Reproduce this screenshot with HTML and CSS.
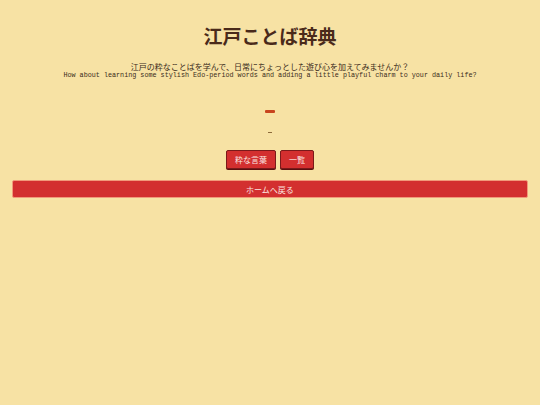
FILE: index.html
```html
<!DOCTYPE html>
<html lang="ja">
<head>
<meta charset="utf-8">
<link rel="stylesheet" href="styles.css">
</head>
<body>
<main class="page">
  <h1 class="title">江戸ことば辞典</h1>
  <div class="intro">
    <p class="intro-ja">江戸の粋なことばを学んで、日常にちょっとした遊び心を加えてみませんか？</p>
    <p class="intro-en">How about learning some stylish Edo-period words and adding a little playful charm to your daily life?</p>
  </div>
  <div class="word">
    <div class="word-mark"></div>
    <div class="word-sub"></div>
  </div>
  <nav class="actions">
    <button class="btn">粋な言葉</button>
    <button class="btn">一覧</button>
  </nav>
  <button class="btn-wide">ホームへ戻る</button>
</main>
</body>
</html>
```
FILE: styles.css
```css
html, body {
  margin: 0;
  padding: 0;
  background: #f7e2a4;
}
.page {
  padding: 22px 12px 0;
  font-family: "Noto Sans CJK JP", sans-serif;
  color: #4a2a1a;
  display: flex;
  flex-direction: column;
  align-items: center;
}
.title {
  margin: 0;
  font-size: 19px;
  line-height: 28px;
  font-weight: 700;
  color: #4a2a1a;
}
.intro {
  margin-top: 12px;
  text-align: center;
}
.intro p {
  margin: 0;
}
.intro-ja {
  font-size: 8px;
  line-height: 9px;
  color: #3a2a1a;
}
.intro-en {
  font-family: "Liberation Mono", monospace;
  font-size: 6.75px;
  line-height: 8px;
  color: #3a2a1a;
}
.word {
  margin-top: 31px;
  display: flex;
  flex-direction: column;
  align-items: center;
}
.word-mark {
  width: 10px;
  height: 3px;
  background: #c8441e;
  border-radius: 1px;
}
.word-sub {
  margin-top: 19px;
  width: 4px;
  height: 1px;
  background: #8c6a3a;
}
.actions {
  margin-top: 17px;
  display: flex;
  gap: 4px;
}
.btn {
  font-family: "Noto Sans CJK JP", sans-serif;
  font-size: 8px;
  color: #fbe6e0;
  background: #d32f2f;
  border: 1px solid #7a1a1a;
  border-radius: 2px;
  height: 19px;
  padding: 0 8px;
  box-shadow: 0 1px 0 #5a1010;
}
.btn-wide {
  margin-top: 11px;
  align-self: stretch;
  height: 18px;
  font-family: "Noto Sans CJK JP", sans-serif;
  font-size: 8px;
  color: #fbe6e0;
  background: #d32f2f;
  border: 1px solid #f19a7a;
  border-radius: 2px;
  padding: 0;
}
```
